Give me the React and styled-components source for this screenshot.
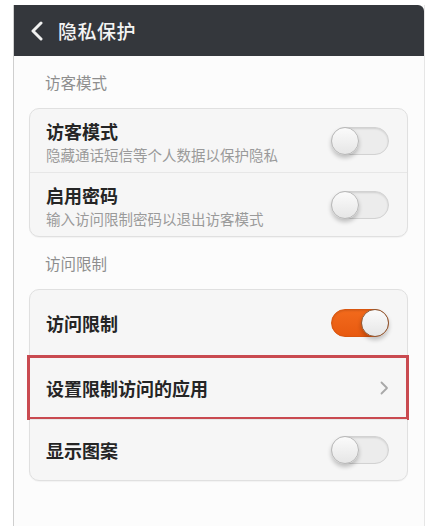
import React from 'react';
import styled, { createGlobalStyle } from 'styled-components';

const GlobalStyle = createGlobalStyle`
  html, body {
    margin: 0;
    padding: 0;
    background: #ffffff;
  }
  body {
    font-family: "Noto Sans CJK SC", "Noto Sans", sans-serif;
  }
`;

const Screen = styled.div`
  margin: 5px 0 0 13px;
  width: 412px;
  height: 521px;
  background: #fcfcfc;
  border-left: 1px solid #cfcfcf;
  border-right: 1px solid #e6e6e6;
  box-sizing: border-box;
  display: flex;
  flex-direction: column;
`;

const Header = styled.div`
  height: 51px;
  background: #34373c;
  display: flex;
  align-items: center;
  padding-left: 16px;
  gap: 14px;
  flex-shrink: 0;
  border-top-right-radius: 6px;
`;

const Title = styled.div`
  color: #f4f4f4;
  font-size: 19px;
  font-weight: 500;
  letter-spacing: 0.5px;
`;

const Content = styled.div`
  padding: 0 16px 0 15px;
  display: flex;
  flex-direction: column;
`;

const SectionLabel = styled.div`
  color: #8e8e8e;
  font-size: 15.5px;
  padding-left: 16px;
  height: 52px;
  display: flex;
  align-items: center;
`;

const Card = styled.div`
  background: #f6f6f6;
  border: 1px solid #e0e0e0;
  border-radius: 10px;
  box-shadow: 0 1px 1px rgba(0, 0, 0, 0.04);
  display: flex;
  flex-direction: column;
  position: relative;
`;

const Row = styled.div`
  height: ${p => p.$h || 63}px;
  display: flex;
  align-items: center;
  justify-content: space-between;
  padding: 0 18px 0 16px;
  box-sizing: border-box;
  border-top: ${p => (p.$first ? 'none' : '1px solid #e7e7e7')};
  position: relative;
`;

const Highlight = styled.div`
  position: absolute;
  left: -3px;
  right: -2px;
  top: -1px;
  bottom: -1px;
  border: 3px solid #c94a50;
  pointer-events: none;
`;

const Texts = styled.div`
  display: flex;
  flex-direction: column;
  margin-top: 1px;
`;

const RowTitle = styled.div`
  color: #252525;
  font-size: 18px;
  font-weight: 700;
  line-height: 26px;
`;

const RowSub = styled.div`
  color: #9a9a9a;
  font-size: 14.5px;
  line-height: 21px;
`;

const Track = styled.div`
  width: 58px;
  height: 28px;
  border-radius: 14px;
  box-sizing: border-box;
  position: relative;
  background: ${p => (p.$on ? 'linear-gradient(#f26a1c, #e85a10)' : '#ececec')};
  border: 1px solid ${p => (p.$on ? '#d9560f' : '#d2d2d2')};
  box-shadow: inset 0 1px 2px rgba(0, 0, 0, 0.12);
`;

const Knob = styled.div`
  position: absolute;
  top: -1px;
  ${p => (p.$on ? 'right: -1px;' : 'left: -1px;')}
  width: 28px;
  height: 28px;
  border-radius: 50%;
  box-sizing: border-box;
  background: linear-gradient(#fbfbfb, #e6e6e6);
  border: 1px solid ${p => (p.$on ? '#8a5a3a' : '#b9b9b9')};
  box-shadow: 0 3px 4px rgba(0, 0, 0, 0.22);
`;

const Toggle = ({ on }) => (
  <Track $on={on}>
    <Knob $on={on} />
  </Track>
);

const BackIcon = () => (
  <svg width="14" height="20" viewBox="0 0 14 20">
    <path d="M11 2 L3 10 L11 18" fill="none" stroke="#f0f0f0" strokeWidth="3" strokeLinecap="round" strokeLinejoin="round" />
  </svg>
);

const Chevron = () => (
  <svg width="9" height="14" viewBox="0 0 9 14">
    <path d="M1.5 1.5 L7 7 L1.5 12.5" fill="none" stroke="#a8a8a8" strokeWidth="1.8" strokeLinecap="round" strokeLinejoin="round" />
  </svg>
);

export default function App() {
  return (
    <>
      <GlobalStyle />
      <Screen>
        <Header>
          <BackIcon />
          <Title>隐私保护</Title>
        </Header>
        <Content>
          <SectionLabel>访客模式</SectionLabel>
          <Card>
            <Row $first>
              <Texts>
                <RowTitle>访客模式</RowTitle>
                <RowSub>隐藏通话短信等个人数据以保护隐私</RowSub>
              </Texts>
              <Toggle />
            </Row>
            <Row $h={64}>
              <Texts>
                <RowTitle>启用密码</RowTitle>
                <RowSub>输入访问限制密码以退出访客模式</RowSub>
              </Texts>
              <Toggle />
            </Row>
          </Card>
          <SectionLabel>访问限制</SectionLabel>
          <Card>
            <Row $first $h={65}>
              <RowTitle>访问限制</RowTitle>
              <Toggle on />
            </Row>
            <Row $h={64}>
              <RowTitle>设置限制访问的应用</RowTitle>
              <Chevron />
              <Highlight />
            </Row>
            <Row $h={61}>
              <RowTitle>显示图案</RowTitle>
              <Toggle />
            </Row>
          </Card>
        </Content>
      </Screen>
    </>
  );
}
